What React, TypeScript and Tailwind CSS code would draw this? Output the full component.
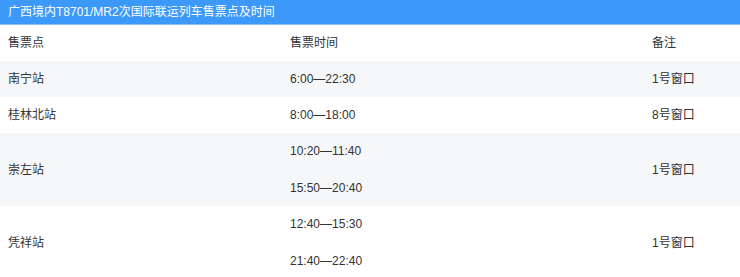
import React from "react";

const rows = [
  { name: "南宁站", times: ["6:00—22:30"], note: "1号窗口", gray: true },
  { name: "桂林北站", times: ["8:00—18:00"], note: "8号窗口", gray: false },
  { name: "崇左站", times: ["10:20—11:40", "15:50—20:40"], note: "1号窗口", gray: true },
  { name: "凭祥站", times: ["12:40—15:30", "21:40—22:40"], note: "1号窗口", gray: false },
];

export default function App() {
  return (
    <div
      className="w-[740px] h-[277px] overflow-hidden bg-white text-[12px] text-[#333]"
      style={{ fontFamily: '"Liberation Sans", "Noto Sans CJK SC", sans-serif' }}
    >
      <div className="h-[24px] bg-[#3c98f9] text-white text-[12px] leading-[24px] pl-[8px]">
        广西境内T8701/MR2次国际联运列车售票点及时间
      </div>
      <div className="h-[1px] bg-[#8cc2fb]" />
      <div className="grid grid-cols-[282px_362px_96px] h-[36px] items-center">
        <div className="pl-[8px]">售票点</div>
        <div className="pl-[8px]">售票时间</div>
        <div className="pl-[8px]">备注</div>
      </div>
      {rows.map((r) => (
        <div
          key={r.name}
          className={`grid grid-cols-[282px_362px_96px] items-center ${r.gray ? "bg-[#f6f7f9]" : "bg-white"}`}
        >
          <div className="pl-[8px]">{r.name}</div>
          <div className="pl-[8px] flex flex-col">
            {r.times.map((t) => (
              <div key={t} className={`leading-[36px] ${r.times.length > 1 ? "h-[36.5px]" : "h-[36px]"}`}>
                {t}
              </div>
            ))}
          </div>
          <div className="pl-[8px]">{r.note}</div>
        </div>
      ))}
    </div>
  );
}
